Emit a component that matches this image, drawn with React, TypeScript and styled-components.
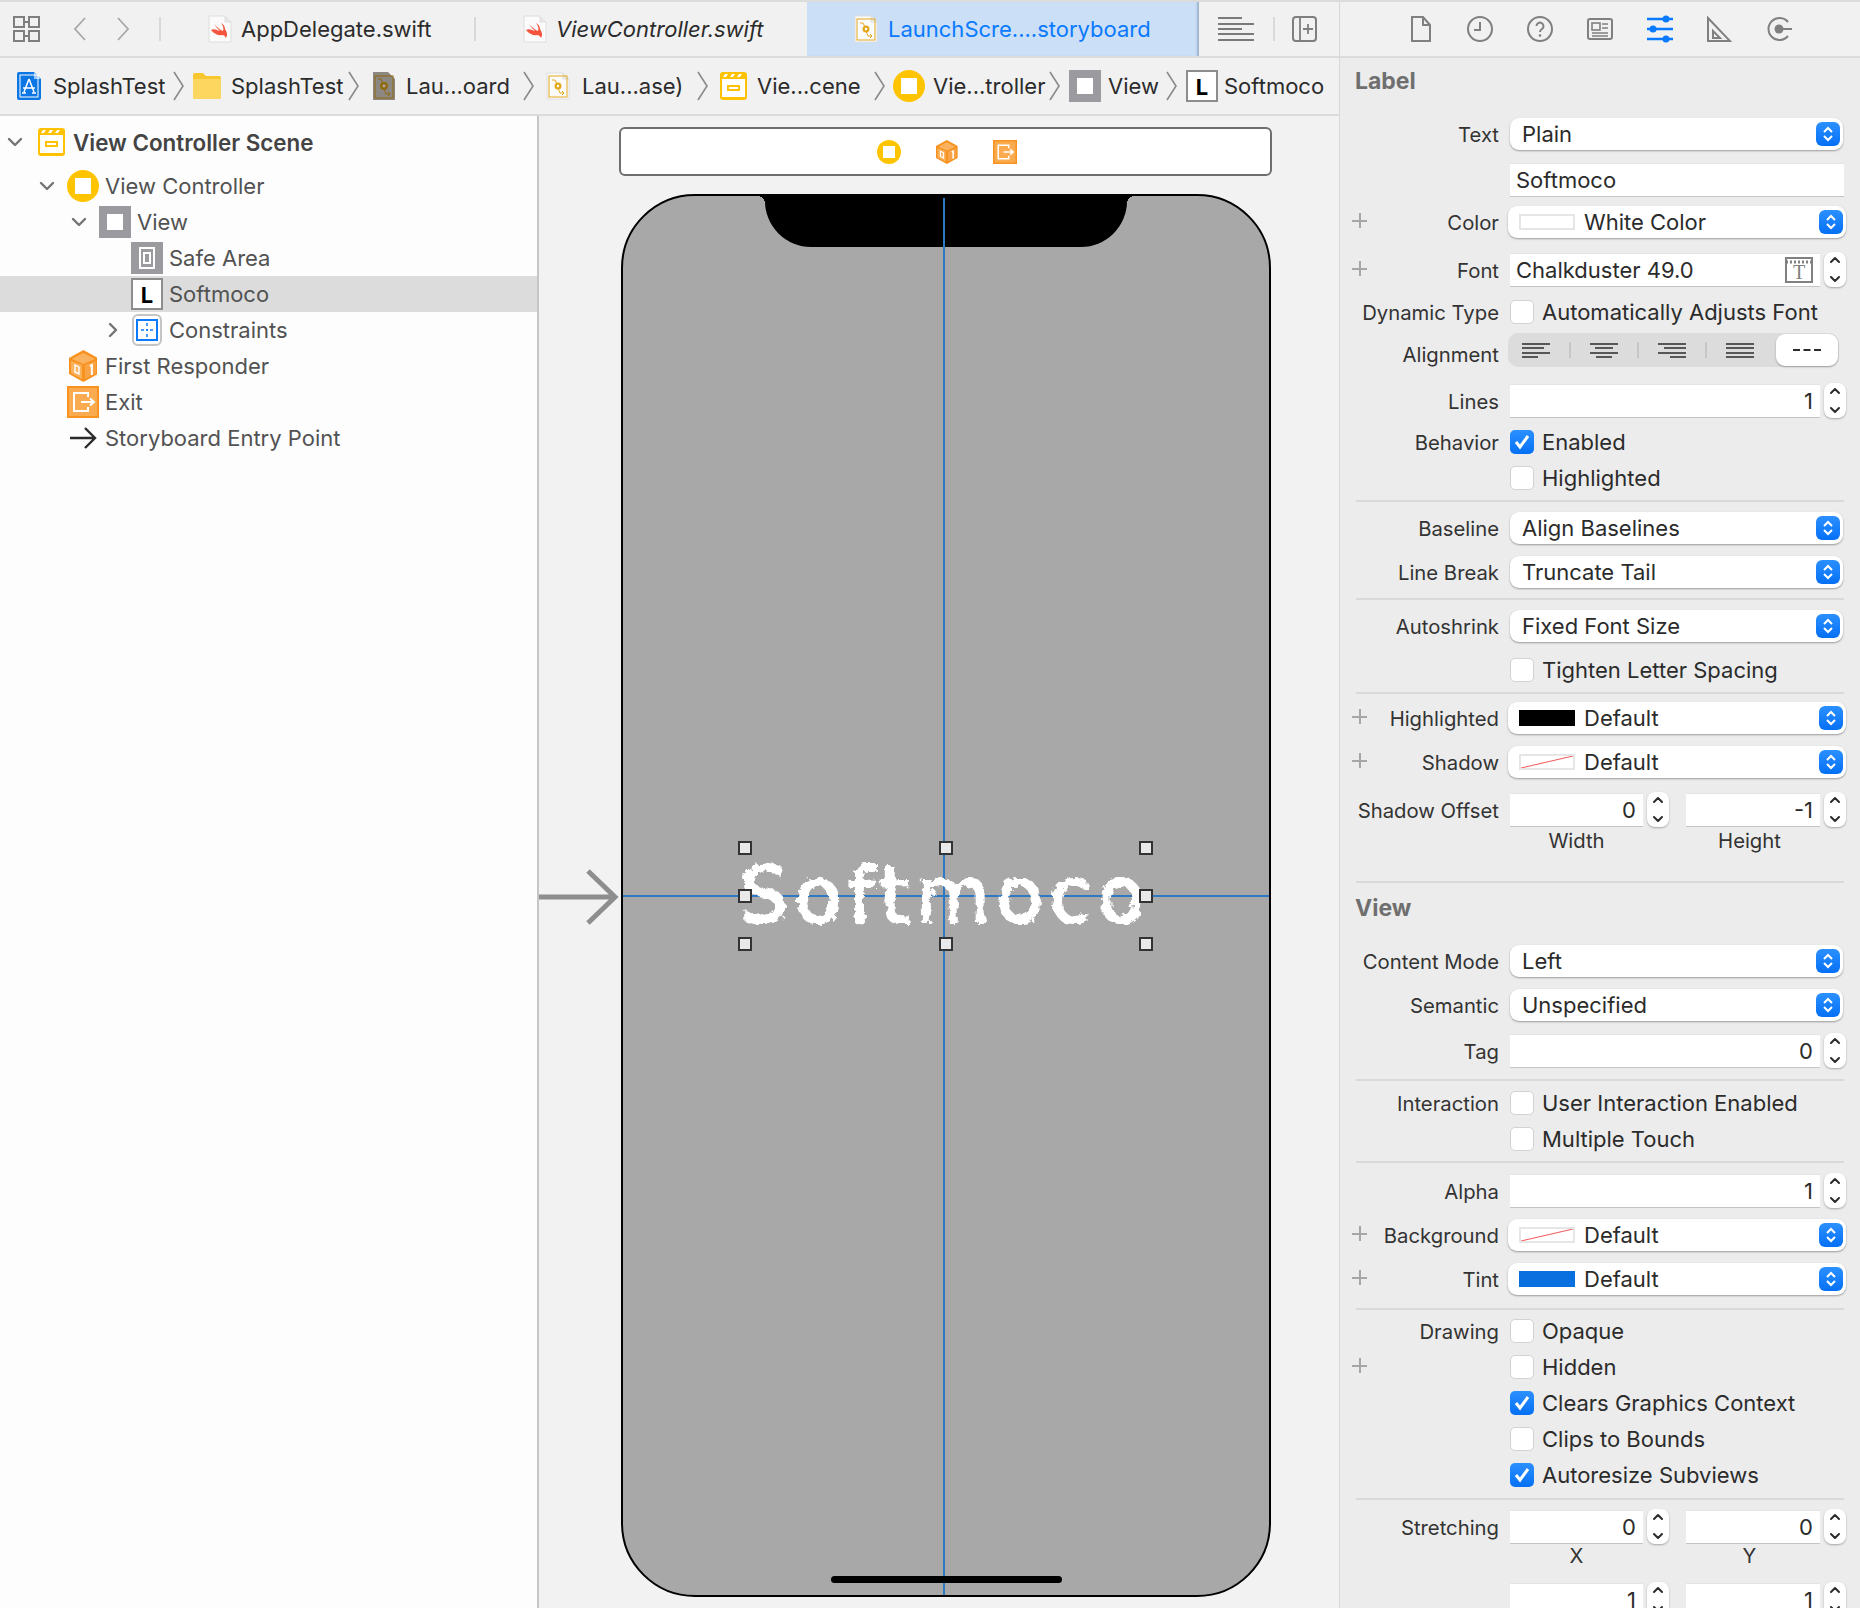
import React from 'react';
import styled, { createGlobalStyle } from 'styled-components';
import { ChevronDown, ChevronRight, ChevronUp } from 'lucide-react';

const GlobalStyle = createGlobalStyle`
  html, body {
    margin: 0;
    padding: 0;
    background: #ececec;
    font-family: Inter, "Liberation Sans", sans-serif;
    font-size: 22px;
    color: #2b2b2b;
  }
`;

const Window = styled.div`
  width: 1860px;
  height: 1608px;
  overflow: hidden;
  display: flex;
  border-top: 2px solid #dcdcdc;
  box-sizing: border-box;
`;

const MainColumn = styled.div`
  width: 1339px;
  display: flex;
  flex-direction: column;
  flex: none;
`;

const TabBar = styled.div`
  height: 54px;
  display: flex;
  align-items: center;
  background: #f1f1f1;
  flex: none;
`;

const ToolButton = styled.div<{ $ml?: number; $w?: number }>`
  margin-left: ${p => p.$ml ?? 0}px;
  width: ${p => p.$w ?? 27}px;
  display: flex;
  align-items: center;
  justify-content: center;
  flex: none;
`;

const BarSeparator = styled.div<{ $ml: number }>`
  margin-left: ${p => p.$ml}px;
  width: 2px;
  height: 24px;
  background: #d9d9d9;
  flex: none;
`;

const Tab = styled.div<{ $w: number; $active?: boolean; $italic?: boolean }>`
  width: ${p => p.$w}px;
  height: 54px;
  box-sizing: border-box;
  padding-left: 47px;
  display: flex;
  align-items: center;
  gap: ${p => (p.$active ? 10 : 9)}px;
  flex: none;
  font-style: ${p => (p.$italic ? 'italic' : 'normal')};
  color: ${p => (p.$active ? '#0a7aff' : '#2b2b2b')};
  background: ${p => (p.$active ? '#cbdff7' : 'transparent')};
  box-shadow: ${p => (p.$active ? 'inset -3px 0 2px -1px #9db3cd' : 'none')};
`;

const PathBar = styled.div`
  height: 56px;
  display: flex;
  align-items: center;
  padding-left: 17px;
  background: #f1f1f1;
  border-top: 2px solid #dcdcdc;
  border-bottom: 2px solid #dcdcdc;
  flex: none;
`;

const Crumb = styled.div<{ $w: number }>`
  width: ${p => p.$w}px;
  display: flex;
  align-items: center;
  flex: none;
`;

const CrumbText = styled.span<{ $ml: number }>`
  margin-left: ${p => p.$ml}px;
  white-space: nowrap;
`;

const CrumbArrow = styled.svg<{ $mr: number }>`
  margin-left: auto;
  margin-right: ${p => p.$mr}px;
  flex: none;
`;

const Workspace = styled.div`
  flex: 1;
  display: flex;
  min-height: 0;
`;

const Outline = styled.div`
  width: 537px;
  padding-top: 8px;
  background: #fdfdfd;
  border-right: 2px solid #c6c6c6;
  flex: none;
  color: #525252;
`;

const TreeRow = styled.div<{ $level: number; $selected?: boolean; $bold?: boolean; $mb?: number }>`
  height: 36px;
  display: flex;
  align-items: center;
  padding-left: ${p => 3 + p.$level * 32}px;
  margin-bottom: ${p => p.$mb ?? 0}px;
  background: ${p => (p.$selected ? '#dcdcdc' : 'transparent')};
  font-weight: ${p => (p.$bold ? 600 : 400)};
  font-size: ${p => (p.$bold ? 22.4 : 22)}px;
  color: ${p => (p.$bold ? '#444' : '#525252')};
`;

const Disclosure = styled.div<{ $pl?: number }>`
  width: 32px;
  box-sizing: border-box;
  padding-left: ${p => p.$pl ?? 0}px;
  display: flex;
  align-items: center;
  color: #747474;
  flex: none;
`;

const TreeIcon = styled.div`
  width: 32px;
  height: 32px;
  display: flex;
  align-items: center;
  justify-content: center;
  flex: none;
`;

const TreeText = styled.span`
  margin-left: 6px;
  white-space: nowrap;
`;

const Canvas = styled.div`
  flex: 1;
  position: relative;
  background: #f2f2f2;
  padding: 11px 0 0 80px;
  overflow: hidden;
`;

const SceneBar = styled.div`
  width: 653px;
  height: 49px;
  box-sizing: border-box;
  background: #fff;
  border: 2px solid #6e6e6e;
  border-radius: 6px;
  display: flex;
  align-items: center;
  justify-content: center;
  gap: 35px;
  padding-left: 3px;
`;

const Phone = styled.div`
  position: relative;
  margin: 18px 0 0 2px;
  width: 650px;
  height: 1403px;
  box-sizing: border-box;
  border: 2.5px solid #000;
  border-radius: 74px;
  background: #a8a8a8;
  display: flex;
  align-items: center;
  justify-content: center;
`;

const Notch = styled.div`
  position: absolute;
  top: -1px;
  left: 142px;
  width: 362px;
  height: 52px;
  background: #000;
  border-radius: 0 0 46px 46px;

  &::before,
  &::after {
    content: '';
    position: absolute;
    top: 1px;
    width: 8px;
    height: 8px;
  }
  &::before {
    left: -8px;
    background: radial-gradient(circle at 0 100%, transparent 8px, #000 8px);
  }
  &::after {
    right: -8px;
    background: radial-gradient(circle at 100% 100%, transparent 8px, #000 8px);
  }
`;

const VerticalGuide = styled.div`
  position: absolute;
  top: 2px;
  bottom: 0;
  left: 320px;
  width: 2px;
  background: #2f78c4;
`;

const HorizontalGuide = styled.div`
  position: absolute;
  left: 0;
  right: 0;
  top: 699px;
  height: 2px;
  background: #2f78c4;
`;

const HomeBar = styled.div`
  position: absolute;
  bottom: 12px;
  left: 208px;
  width: 231px;
  height: 7px;
  border-radius: 4px;
  background: #000;
`;

const EntryArrow = styled.svg`
  position: absolute;
  left: 0;
  top: 752px;
`;

const LabelBox = styled.div`
  position: relative;
  width: 401px;
  height: 96px;
  display: flex;
  align-items: center;
  justify-content: center;
  margin: 1px 0 0 -1px;
`;

const ChalkText = styled.div`
  font-family: "DejaVu Sans", sans-serif;
  font-size: 76px;
  letter-spacing: 6.5px;
  font-weight: 400;
  color: #fff;
  filter: url(#chalk);
  line-height: 96px;
  white-space: nowrap;
`;

const Handle = styled.div<{ $x: number; $y: number }>`
  position: absolute;
  left: ${p => p.$x * 50}%;
  top: ${p => p.$y * 50}%;
  width: 14px;
  height: 14px;
  margin: -7px 0 0 -7px;
  box-sizing: border-box;
  border: 2.5px solid #333;
  background: #e9e9e9;
`;

const Inspector = styled.div`
  flex: 1;
  display: flex;
  flex-direction: column;
  background: #ececec;
  border-left: 1px solid #d8d8d8;
  overflow: hidden;
`;

const InspectorTabs = styled.div`
  height: 54px;
  background: #f1f1f1;
  border-bottom: 2px solid #dcdcdc;
  display: flex;
  align-items: center;
  padding-left: 71px;
  gap: 34px;
  flex: none;
`;

const SectionTitle = styled.div<{ $mt?: number }>`
  height: 46px;
  margin-top: ${p => p.$mt ?? 0}px;
  padding-left: 15px;
  display: flex;
  align-items: center;
  font-weight: 700;
  font-size: 23px;
  color: #6f6f6f;
  flex: none;
`;

const Field = styled.div<{ $mt: number }>`
  margin-top: ${p => p.$mt}px;
  display: flex;
  align-items: center;
  flex: none;
`;

const FieldLabel = styled.div<{ $dy?: number }>`
  width: 159px;
  height: 24px;
  box-sizing: border-box;
  flex: none;
  display: flex;
  align-items: center;
  justify-content: flex-end;
  position: relative;
  white-space: nowrap;
  font-size: 20.3px;
  color: #333;
  padding-top: ${p => p.$dy ?? 1}px;
`;

const PlusMark = styled.span`
  position: absolute;
  left: 12px;
  top: 3px;
  width: 15px;
  height: 15px;
  background:
    linear-gradient(#a6a6a6, #a6a6a6) center / 15px 2px no-repeat,
    linear-gradient(#a6a6a6, #a6a6a6) center / 2px 15px no-repeat;
`;

const SelectBox = styled.div<{ $wide?: boolean }>`
  margin-left: ${p => (p.$wide ? 9 : 11)}px;
  width: ${p => (p.$wide ? 338 : 333)}px;
  height: 32px;
  box-sizing: border-box;
  border-radius: 9px;
  background: #fff;
  box-shadow: 0 1px 2px rgba(0, 0, 0, 0.35);
  display: flex;
  align-items: center;
  padding: 0 3px 0 ${p => (p.$wide ? 11 : 12)}px;
  flex: none;
`;

const SelectValue = styled.span`
  flex: 1;
  white-space: nowrap;
`;

const Swatch = styled.span<{ $fill: string }>`
  width: 56px;
  height: 16px;
  box-sizing: border-box;
  margin-right: 9px;
  flex: none;
  ${p =>
    p.$fill === 'none'
      ? `border: 2px solid #e6e6e6; background: linear-gradient(to bottom right, #fff calc(50% - 1px), #f45a5a 50%, #fff calc(50% + 1px));`
      : p.$fill === '#fff'
        ? `border: 2px solid #e6e6e6; background: #fff;`
        : `background: ${p.$fill};`}
`;

const PopupButton = styled.span`
  width: 24px;
  height: 24px;
  border-radius: 6px;
  background: linear-gradient(#2b90ff, #0570f5);
  display: flex;
  align-items: center;
  justify-content: center;
  flex: none;
`;

const TextInput = styled.div<{ $w: number; $right?: boolean; $ml?: number }>`
  margin-left: ${p => p.$ml ?? 11}px;
  width: ${p => p.$w}px;
  height: 34px;
  box-sizing: border-box;
  background: #fff;
  border-top: 1px solid #e4e4e4;
  border-bottom: 1.5px solid #c4c4c4;
  display: flex;
  align-items: center;
  justify-content: ${p => (p.$right ? 'flex-end' : 'space-between')};
  padding: 0 7px 0 6px;
  flex: none;
  white-space: nowrap;
`;

const Stepper = styled.div`
  margin: -1px 0 0 4px;
  width: 22px;
  height: 35px;
  border-radius: 8px;
  background: #fff;
  box-shadow: 0 1px 2px rgba(0, 0, 0, 0.3);
  display: flex;
  flex-direction: column;
  align-items: center;
  justify-content: space-between;
  color: #2b2b2b;
  flex: none;
`;

const CheckMark = styled.span<{ $on?: boolean }>`
  margin-left: 11px;
  width: 24px;
  height: 24px;
  box-sizing: border-box;
  border-radius: 5px;
  background: ${p => (p.$on ? 'linear-gradient(#2b90ff, #0570f5)' : '#fff')};
  border: ${p => (p.$on ? 'none' : '1px solid #d2d2d2')};
  display: flex;
  align-items: center;
  justify-content: center;
  flex: none;
`;

const CheckText = styled.span`
  margin-left: 8px;
  line-height: 24px;
  white-space: nowrap;
`;

const Segmented = styled.div`
  margin-left: 9px;
  width: 331px;
  height: 34px;
  border-radius: 10px;
  background: #dcdcdc;
  display: flex;
  align-items: center;
  gap: 19px;
  padding-left: 14px;
  box-sizing: border-box;
  flex: none;
`;

const SegmentGap = styled.span`
  width: 2px;
  height: 16px;
  background: #c6c6c6;
  flex: none;
`;

const SegmentActive = styled.div`
  margin-left: auto;
  margin-right: 1px;
  width: 62px;
  height: 32px;
  border-radius: 9px;
  background: #fff;
  box-shadow: 0 1px 2px rgba(0, 0, 0, 0.3);
  display: flex;
  align-items: center;
  justify-content: center;
  flex: none;
`;

const Divider = styled.div<{ $mt: number }>`
  margin: ${p => p.$mt}px 16px 0 16px;
  height: 2px;
  background: #d9d9d9;
  flex: none;
`;

const CaptionRow = styled.div<{ $mt: number }>`
  margin-top: ${p => p.$mt}px;
  padding-left: 170px;
  height: 24px;
  display: flex;
  flex: none;
  font-size: 20.3px;
  line-height: 24px;
  color: #333;
`;

const Caption = styled.span<{ $w: number }>`
  width: ${p => p.$w}px;
  text-align: center;
  flex: none;
`;

/* ---------- icons ---------- */

function SwiftFile() {
  return (
    <svg width="24" height="28" viewBox="0 0 24 28">
      <path d="M1 1h16l6 6v20H1z" fill="#fbfbfb" stroke="#dedede" />
      <path d="M17 1v6h6" fill="#e8e8e8" stroke="#dedede" />
      <path
        d="M3 15c3 4 8 6 11 5 2 0 3 1 4 3 2-3 1-6-1-9 0-3-2-5-4-6 2 3 3 5 2 8-3-1-6-4-9-7 2 3 4 5 6 7-3-1-6-3-9-1z"
        fill="#f4553c"
      />
    </svg>
  );
}

function StoryboardFile() {
  return (
    <svg width="24" height="28" viewBox="0 0 24 28">
      <path d="M1 1h16l6 6v20H1z" fill="#fbfbfb" stroke="#dedede" />
      <path d="M17 1v6h6" fill="#e8e8e8" stroke="#dedede" />
      <rect x="3" y="4" width="18" height="21" fill="none" stroke="#e2a91e" />
      <path d="M6 8h3l2 4M12 16l2 5h4M16 19l2 2-2 2" fill="none" stroke="#e2a91e" />
      <circle cx="12" cy="14" r="3.5" fill="#e2a91e" />
      <circle cx="12" cy="14" r="1.2" fill="#fff" />
    </svg>
  );
}

function DarkStoryboardFile() {
  return (
    <svg width="24" height="30" viewBox="0 0 24 30">
      <path d="M1 1h15l7 7v21H1z" fill="#8c8780" />
      <rect x="3" y="5" width="18" height="22" fill="none" stroke="#8f6a10" />
      <path d="M6 8h3l2 5M12 18l2 5h4M16 21l2 2-2 2" fill="none" stroke="#8f6a10" />
      <circle cx="12" cy="15" r="4" fill="#8f6a10" />
      <circle cx="12" cy="15" r="1.4" fill="#aaa" />
    </svg>
  );
}

function ProjectFile() {
  return (
    <svg width="24" height="28" viewBox="0 0 24 28">
      <path d="M2 0h15l7 7v19a2 2 0 0 1-2 2H2a2 2 0 0 1-2-2V2a2 2 0 0 1 2-2z" fill="#0c76e4" />
      <path d="M17 0v7h7" fill="#9cc8f5" />
      <rect x="3" y="3" width="18" height="22" fill="none" stroke="#fff" strokeWidth="1" />
      <path d="M12 7L7 20M12 7l5 13M6 16h12M5 21h4M15 21h4" stroke="#fff" strokeWidth="1.5" fill="none" />
    </svg>
  );
}

function FolderIcon() {
  return (
    <svg width="28" height="26" viewBox="0 0 28 26">
      <path d="M2 0h8l3 3h13a2 2 0 0 1 2 2v19a2 2 0 0 1-2 2H2a2 2 0 0 1-2-2V2a2 2 0 0 1 2-2z" fill="#f8c62f" />
      <path d="M0 6h28v18a2 2 0 0 1-2 2H2a2 2 0 0 1-2-2z" fill="#fdd660" />
    </svg>
  );
}

function SceneIcon() {
  return (
    <svg width="27" height="28" viewBox="0 0 27 28">
      <rect width="27" height="28" rx="3" fill="#ffc200" />
      <rect x="2" y="7" width="23" height="18" fill="#fff" />
      <path d="M3 5l2-3h3l-2 3zM10 5l2-3h3l-2 3zM17 5l2-3h3l-2 3z" fill="#fff" />
      <rect x="7" y="13" width="13" height="6" fill="#ffc200" />
      <rect x="9" y="15" width="9" height="2" fill="#fff" />
    </svg>
  );
}

function ControllerIcon({ w = 32, h = 32 }: { w?: number; h?: number }) {
  return (
    <svg width={w} height={h} viewBox="0 0 32 32">
      <ellipse cx="16" cy="16" rx="16" ry="16" fill="#ffc400" />
      <rect x="8" y="8" width="16" height="16" fill="#fff" />
    </svg>
  );
}

function ViewIcon() {
  return (
    <svg width="32" height="32" viewBox="0 0 32 32">
      <rect width="32" height="32" fill="#9b9b9f" />
      <rect x="8" y="8" width="16" height="16" fill="#fff" />
    </svg>
  );
}

function SafeAreaIcon() {
  return (
    <svg width="32" height="32" viewBox="0 0 32 32">
      <rect width="32" height="32" fill="#9b9b9f" />
      <rect x="9" y="6" width="14" height="20" fill="none" stroke="#fff" strokeWidth="2" />
      <rect x="13" y="11" width="6" height="10" fill="none" stroke="#fff" strokeWidth="2" />
    </svg>
  );
}

function LabelIcon() {
  return (
    <svg width="32" height="32" viewBox="0 0 32 32">
      <rect x="1" y="1" width="30" height="30" fill="#fff" stroke="#8d8d8d" strokeWidth="2" />
      <text x="16" y="25" textAnchor="middle" fontFamily="Inter, sans-serif" fontWeight="700" fontSize="22" fill="#000">
        L
      </text>
    </svg>
  );
}

function ConstraintsIcon() {
  return (
    <svg width="30" height="32" viewBox="0 0 30 32">
      <rect x="1" y="1" width="28" height="30" rx="5" fill="#fff" stroke="#c4c4c4" strokeWidth="2" />
      <rect x="5" y="6" width="20" height="20" fill="#fff" stroke="#0a7aff" strokeWidth="2" />
      <path d="M15 9v3M15 15v2M15 20v3M9 16h3M14 16h2M18 16h3" stroke="#0a7aff" strokeWidth="1.5" />
    </svg>
  );
}

function CubeIcon({ size = 32 }: { size?: number }) {
  return (
    <svg width={size * 0.9} height={size} viewBox="0 0 29 32">
      <path d="M14.5 0L29 8v16l-14.5 8L0 24V8z" fill="#f7921e" />
      <path d="M14.5 3L26 9l-11.5 5L3 9z" fill="#fbb25f" />
      <path d="M2 11l11 4v14L2 23z" fill="#fbb25f" />
      <path d="M16 15l11-4v12l-11 6z" fill="#f9a347" />
      <path d="M6 15l4 2v7l-4-2z" fill="none" stroke="#fff" strokeWidth="1.4" />
      <path d="M21 16l2-1v10" fill="none" stroke="#fff" strokeWidth="2" />
    </svg>
  );
}

function ExitIcon({ size = 32 }: { size?: number }) {
  return (
    <svg width={size} height={size} viewBox="0 0 32 32">
      <rect x="1" y="1" width="30" height="30" fill="#fbab4f" stroke="#f7931e" strokeWidth="2" />
      <path d="M21 11V7H7v18h14v-4" fill="none" stroke="#fff" strokeWidth="2" />
      <path d="M14 16h13M23 12.5L27 16l-4 3.5" fill="none" stroke="#fff" strokeWidth="2" />
    </svg>
  );
}

function EntryIcon() {
  return (
    <svg width="28" height="24" viewBox="0 0 28 24">
      <path d="M1 12h25M16 2l10 10-10 10" fill="none" stroke="#2b2b2b" strokeWidth="2.4" />
    </svg>
  );
}

function PopupArrows() {
  return (
    <svg width="12" height="18" viewBox="0 0 12 18">
      <path d="M2 7l4-4 4 4M2 11l4 4 4-4" fill="none" stroke="#fff" strokeWidth="2" />
    </svg>
  );
}

function Tick() {
  return (
    <svg width="18" height="16" viewBox="0 0 18 16">
      <path d="M3 8l4 5 8-11" fill="none" stroke="#fff" strokeWidth="3" />
    </svg>
  );
}

function AlignIcon({ kind }: { kind: 'left' | 'center' | 'right' | 'full' }) {
  const lines: Record<string, string> = {
    left: 'M0 1h28M0 5h22M0 10h28M0 14h16',
    center: 'M0 1h28M5 5h18M0 10h28M6 14h16',
    right: 'M0 1h28M6 5h22M0 10h28M12 14h16',
    full: 'M0 1h28M0 5h28M0 10h28M0 14h28',
  };
  return (
    <svg width="28" height="15" viewBox="0 0 28 15" style={{ flex: 'none' }}>
      <path d={lines[kind]} stroke="#2b2b2b" strokeWidth="1.6" fill="none" />
    </svg>
  );
}

/* ---------- inspector rows ---------- */

interface FieldProps {
  label?: string;
  mt: number;
  plus?: boolean;
}

function RowLabel({ label, plus, dy }: { label?: string; plus?: boolean; dy?: number }) {
  return (
    <FieldLabel $dy={dy}>
      {plus && <PlusMark />}
      {label}
    </FieldLabel>
  );
}

function SelectField({ label, value, mt, plus, swatch }: FieldProps & { value: string; swatch?: string }) {
  return (
    <Field $mt={mt}>
      <RowLabel label={label} plus={plus} />
      <SelectBox $wide={!!swatch}>
        {swatch && <Swatch $fill={swatch} />}
        <SelectValue>{value}</SelectValue>
        <PopupButton>
          <PopupArrows />
        </PopupButton>
      </SelectBox>
    </Field>
  );
}

function StepperControl() {
  return (
    <Stepper>
      <ChevronUp size={16} strokeWidth={3} />
      <ChevronDown size={16} strokeWidth={3} />
    </Stepper>
  );
}

function NumberField({ label, value, mt }: FieldProps & { value: string }) {
  return (
    <Field $mt={mt}>
      <RowLabel label={label} />
      <TextInput $w={310} $right>
        {value}
      </TextInput>
      <StepperControl />
    </Field>
  );
}

function DualField({ label, a, b, mt }: FieldProps & { a: string; b: string }) {
  return (
    <Field $mt={mt}>
      <RowLabel label={label} />
      <TextInput $w={133} $right>
        {a}
      </TextInput>
      <StepperControl />
      <TextInput $w={134} $right $ml={17}>
        {b}
      </TextInput>
      <StepperControl />
    </Field>
  );
}

function CheckField({ label, text, on, mt, plus }: FieldProps & { text: string; on?: boolean }) {
  return (
    <Field $mt={mt}>
      <RowLabel label={label} plus={plus} />
      <CheckMark $on={on}>{on && <Tick />}</CheckMark>
      <CheckText>{text}</CheckText>
    </Field>
  );
}

const crumbs = [
  { w: 176, text: 'SplashTest', ml: 12, mr: 9, icon: <ProjectFile /> },
  { w: 179, text: 'SplashTest', ml: 10, mr: 13, icon: <FolderIcon /> },
  { w: 174, text: 'Lau...oard', ml: 10, mr: 12, icon: <DarkStoryboardFile /> },
  { w: 174, text: 'Lau...ase)', ml: 12, mr: 12, icon: <StoryboardFile /> },
  { w: 173, text: 'Vie...cene', ml: 10, mr: 8, icon: <SceneIcon /> },
  { w: 176, text: 'Vie...troller', ml: 8, mr: 9, icon: <ControllerIcon /> },
  { w: 117, text: 'View', ml: 7, mr: 9, icon: <ViewIcon /> },
];

export default function App() {
  return (
    <>
      <GlobalStyle />
      <svg width="0" height="0" style={{ position: 'absolute' }}>
        <filter id="chalk" x="-5%" y="-20%" width="110%" height="140%">
          <feTurbulence type="fractalNoise" baseFrequency="0.14" numOctaves="3" seed="4" result="noise" />
          <feMorphology in="SourceGraphic" operator="dilate" radius="1.4" result="fat" />
          <feDisplacementMap in="fat" in2="noise" scale="9" />
        </filter>
      </svg>
      <Window>
        <MainColumn>
          <TabBar>
            <ToolButton $ml={13}>
              <svg width="27" height="26" viewBox="0 0 27 26">
                <path
                  d="M1 1h10v10H1zM16 1h10v10H16zM1 15h10v10H1zM16 15h10v10H16zM11 6h5M11 20h5"
                  fill="none"
                  stroke="#7f7f7f"
                  strokeWidth="2"
                />
              </svg>
            </ToolButton>
            <ToolButton $ml={33} $w={13}>
              <svg width="13" height="24" viewBox="0 0 13 24">
                <path d="M12 1L2 12l10 11" fill="none" stroke="#a8a8a8" strokeWidth="1.8" />
              </svg>
            </ToolButton>
            <ToolButton $ml={31} $w={13}>
              <svg width="13" height="24" viewBox="0 0 13 24">
                <path d="M1 1l10 11L1 23" fill="none" stroke="#a8a8a8" strokeWidth="1.8" />
              </svg>
            </ToolButton>
            <BarSeparator $ml={29} />
            <Tab $w={313}>
              <SwiftFile />
              <span>AppDelegate.swift</span>
            </Tab>
            <BarSeparator $ml={0} />
            <Tab $w={331} $italic>
              <SwiftFile />
              <span>ViewController.swift</span>
            </Tab>
            <Tab $w={392} $active>
              <StoryboardFile />
              <span>LaunchScre....storyboard</span>
            </Tab>
            <ToolButton $ml={19} $w={36}>
              <svg width="36" height="26" viewBox="0 0 36 26">
                <path d="M0 2h24M0 8h36M0 13h24M0 18h36M0 24h36" stroke="#7a7a7a" strokeWidth="2" fill="none" />
              </svg>
            </ToolButton>
            <BarSeparator $ml={19} />
            <ToolButton $ml={17} $w={25}>
              <svg width="25" height="26" viewBox="0 0 25 26">
                <rect x="1" y="1" width="23" height="24" rx="3" fill="none" stroke="#7f7f7f" strokeWidth="2" />
                <path d="M8 1v24M16 8v10M11 13h10" stroke="#7f7f7f" strokeWidth="1.8" fill="none" />
              </svg>
            </ToolButton>
          </TabBar>
          <PathBar>
            {crumbs.map(c => (
              <Crumb key={c.w + c.text} $w={c.w}>
                {c.icon}
                <CrumbText $ml={c.ml}>{c.text}</CrumbText>
                <CrumbArrow $mr={c.mr} width="11" height="30" viewBox="0 0 11 30">
                  <path d="M1 1l9 14-9 14" fill="none" stroke="#8a8a8a" strokeWidth="1.6" />
                </CrumbArrow>
              </Crumb>
            ))}
            <Crumb $w={140}>
              <LabelIcon />
              <CrumbText $ml={6}>Softmoco</CrumbText>
            </Crumb>
          </PathBar>
          <Workspace>
            <Outline>
              <TreeRow $level={0} $bold $mb={8}>
                <Disclosure>
                  <ChevronDown size={24} strokeWidth={2.4} />
                </Disclosure>
                <TreeIcon>
                  <SceneIcon />
                </TreeIcon>
                <TreeText>View Controller Scene</TreeText>
              </TreeRow>
              <TreeRow $level={1}>
                <Disclosure>
                  <ChevronDown size={24} strokeWidth={2.4} />
                </Disclosure>
                <TreeIcon>
                  <ControllerIcon />
                </TreeIcon>
                <TreeText>View Controller</TreeText>
              </TreeRow>
              <TreeRow $level={2}>
                <Disclosure>
                  <ChevronDown size={24} strokeWidth={2.4} />
                </Disclosure>
                <TreeIcon>
                  <ViewIcon />
                </TreeIcon>
                <TreeText>View</TreeText>
              </TreeRow>
              <TreeRow $level={3}>
                <Disclosure />
                <TreeIcon>
                  <SafeAreaIcon />
                </TreeIcon>
                <TreeText>Safe Area</TreeText>
              </TreeRow>
              <TreeRow $level={3} $selected>
                <Disclosure />
                <TreeIcon>
                  <LabelIcon />
                </TreeIcon>
                <TreeText>Softmoco</TreeText>
              </TreeRow>
              <TreeRow $level={3}>
                <Disclosure $pl={2}>
                  <ChevronRight size={24} strokeWidth={2.4} />
                </Disclosure>
                <TreeIcon>
                  <ConstraintsIcon />
                </TreeIcon>
                <TreeText>Constraints</TreeText>
              </TreeRow>
              <TreeRow $level={1}>
                <Disclosure />
                <TreeIcon>
                  <CubeIcon />
                </TreeIcon>
                <TreeText>First Responder</TreeText>
              </TreeRow>
              <TreeRow $level={1}>
                <Disclosure />
                <TreeIcon>
                  <ExitIcon />
                </TreeIcon>
                <TreeText>Exit</TreeText>
              </TreeRow>
              <TreeRow $level={1}>
                <Disclosure />
                <TreeIcon>
                  <EntryIcon />
                </TreeIcon>
                <TreeText>Storyboard Entry Point</TreeText>
              </TreeRow>
            </Outline>
            <Canvas>
              <SceneBar>
                <ControllerIcon w={24} h={24} />
                <CubeIcon size={24} />
                <ExitIcon size={24} />
              </SceneBar>
              <Phone>
                <Notch />
                <VerticalGuide />
                <HorizontalGuide />
                <LabelBox>
                  <ChalkText>Softmoco</ChalkText>
                  {[0, 1, 2].map(x =>
                    [0, 1, 2].map(y => (x === 1 && y === 1 ? null : <Handle key={`${x}${y}`} $x={x} $y={y} />)),
                  )}
                </LabelBox>
                <HomeBar />
              </Phone>
              <EntryArrow width="80" height="58" viewBox="0 0 80 58">
                <path d="M0 29h76M49 3l27 26-27 26" fill="none" stroke="#8e8e8e" strokeWidth="5" />
              </EntryArrow>
            </Canvas>
          </Workspace>
        </MainColumn>
        <Inspector>
          <InspectorTabs>
            <svg width="22" height="26" viewBox="0 0 22 26">
              <path d="M1 1h11l7 8v16H1zM12 1v8h7" fill="none" stroke="#808080" strokeWidth="2" />
            </svg>
            <svg width="26" height="26" viewBox="0 0 26 26">
              <circle cx="13" cy="13" r="12" fill="none" stroke="#808080" strokeWidth="2" />
              <path d="M13 6v8H7" fill="none" stroke="#808080" strokeWidth="2" />
            </svg>
            <svg width="26" height="26" viewBox="0 0 26 26">
              <circle cx="13" cy="13" r="12" fill="none" stroke="#808080" strokeWidth="2" />
              <path d="M9.500 10a3.500 3.500 0 1 1 5.500 3c-1.500 1-2 1.500-2 3" fill="none" stroke="#808080" strokeWidth="2" />
              <circle cx="13" cy="19.500" r="1.300" fill="#808080" />
            </svg>
            <svg width="26" height="22" viewBox="0 0 26 22">
              <rect x="1" y="1" width="24" height="20" rx="2" fill="none" stroke="#808080" strokeWidth="2" />
              <rect x="5" y="5" width="8" height="7" fill="none" stroke="#808080" strokeWidth="1.6" />
              <path d="M15 6h6M15 10h6M5 15h16M5 18h16" stroke="#808080" strokeWidth="1.6" />
            </svg>
            <svg width="26" height="28" viewBox="0 0 26 28">
              <path d="M0 4h26M0 14h26M0 24h26" stroke="#0a7aff" strokeWidth="2.400" />
              <circle cx="19" cy="4" r="3.500" fill="#0a7aff" />
              <circle cx="6" cy="14" r="3.500" fill="#0a7aff" />
              <circle cx="19" cy="24" r="3.500" fill="#0a7aff" />
            </svg>
            <svg width="25" height="26" viewBox="0 0 25 26">
              <path d="M1 2l22 23H1zM6 15l7 7H6z" fill="none" stroke="#808080" strokeWidth="2" />
            </svg>
            <svg width="26" height="26" viewBox="0 0 26 26">
              <path d="M22 6a11 11 0 1 0 0 14" fill="none" stroke="#808080" strokeWidth="2" />
              <circle cx="13" cy="13" r="4.500" fill="#808080" />
              <path d="M13 13h13" stroke="#808080" strokeWidth="2" />
            </svg>
          </InspectorTabs>
          <SectionTitle>Label</SectionTitle>
          <SelectField label="Text" value="Plain" mt={14} />
          <Field $mt={13}>
            <RowLabel />
            <TextInput $w={334}>Softmoco</TextInput>
          </Field>
          <SelectField label="Color" value="White Color" mt={9} plus swatch="#fff" />
          <Field $mt={15}>
            <RowLabel label="Font" plus />
            <TextInput $w={310}>
              Chalkduster 49.0
              <svg width="28" height="26" viewBox="0 0 28 26">
                <rect x="1" y="1" width="26" height="24" fill="#fff" stroke="#808080" strokeWidth="2" />
                <path d="M1 5h26" stroke="#808080" strokeWidth="3" strokeDasharray="2 2" />
                <text x="14" y="22" textAnchor="middle" fontFamily="Liberation Serif, serif" fontSize="20" fill="#808080">
                  T
                </text>
              </svg>
            </TextInput>
            <StepperControl />
          </Field>
          <CheckField label="Dynamic Type" text="Automatically Adjusts Font" mt={13} />
          <Field $mt={9}>
            <RowLabel label="Alignment" dy={9} />
            <Segmented>
              <AlignIcon kind="left" />
              <SegmentGap />
              <AlignIcon kind="center" />
              <SegmentGap />
              <AlignIcon kind="right" />
              <SegmentGap />
              <AlignIcon kind="full" />
              <SegmentActive>
                <svg width="28" height="2" viewBox="0 0 28 2">
                  <path d="M0 1h28" stroke="#2b2b2b" strokeWidth="2" strokeDasharray="7 3.500" />
                </svg>
              </SegmentActive>
            </Segmented>
          </Field>
          <NumberField label="Lines" value="1" mt={17} />
          <CheckField label="Behavior" text="Enabled" on mt={12} />
          <CheckField text="Highlighted" mt={12} />
          <Divider $mt={10} />
          <SelectField label="Baseline" value="Align Baselines" mt={10} />
          <SelectField label="Line Break" value="Truncate Tail" mt={12} />
          <Divider $mt={10} />
          <SelectField label="Autoshrink" value="Fixed Font Size" mt={10} />
          <CheckField text="Tighten Letter Spacing" mt={16} />
          <Divider $mt={10} />
          <SelectField label="Highlighted" value="Default" mt={8} plus swatch="#000" />
          <SelectField label="Shadow" value="Default" mt={12} plus swatch="none" />
          <DualField label="Shadow Offset" a="0" b="-1" mt={15} />
          <CaptionRow $mt={2}>
            <Caption $w={133}>Width</Caption>
            <Caption $w={213}>Height</Caption>
          </CaptionRow>
          <Divider $mt={28} />
          <SectionTitle $mt={2}>View</SectionTitle>
          <SelectField label="Content Mode" value="Left" mt={14} />
          <SelectField label="Semantic" value="Unspecified" mt={12} />
          <NumberField label="Tag" value="0" mt={13} />
          <Divider $mt={11} />
          <CheckField label="Interaction" text="User Interaction Enabled" mt={10} />
          <CheckField text="Multiple Touch" mt={12} />
          <Divider $mt={10} />
          <NumberField label="Alpha" value="1" mt={11} />
          <SelectField label="Background" value="Default" mt={11} plus swatch="none" />
          <SelectField label="Tint" value="Default" mt={12} plus swatch="#0a70e0" />
          <Divider $mt={13} />
          <CheckField label="Drawing" text="Opaque" mt={9} />
          <CheckField text="Hidden" mt={12} plus />
          <CheckField text="Clears Graphics Context" on mt={12} />
          <CheckField text="Clips to Bounds" mt={12} />
          <CheckField text="Autoresize Subviews" on mt={12} />
          <Divider $mt={11} />
          <DualField label="Stretching" a="0" b="0" mt={10} />
          <CaptionRow $mt={0}>
            <Caption $w={133}>X</Caption>
            <Caption $w={213}>Y</Caption>
          </CaptionRow>
          <DualField label=" " a="1" b="1" mt={15} />
        </Inspector>
      </Window>
    </>
  );
}
